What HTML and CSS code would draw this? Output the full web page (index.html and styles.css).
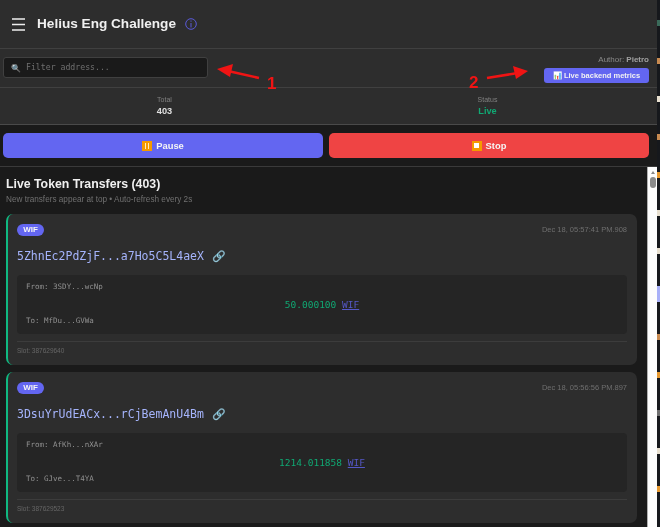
FILE: index.html
```html
<!DOCTYPE html>
<html lang="en">
<head>
<meta charset="utf-8">
<title>Helius Eng Challenge</title>
<link rel="stylesheet" href="styles.css">
</head>
<body>
<div class="app">
  <header class="header">
    <svg class="menu" width="13" height="13" viewBox="0 0 13 13"><path d="M0 1h13M0 6.500h13M0 12h13" stroke="#eee" stroke-width="1.300"/></svg>
    <h1 class="title">Helius Eng Challenge</h1>
    <svg class="info" width="12" height="12" viewBox="0 0 12 12"><circle cx="6" cy="6" r="5.300" fill="none" stroke="#5a5ad8" stroke-width="1"/><path d="M6 5v4.500M6 2.500v1.200" stroke="#5a5ad8" stroke-width="1"/></svg>
  </header>
  <section class="filter-row">
    <div class="filter"><span class="lens">🔍</span><span class="placeholder">Filter address...</span></div>
    <div class="author-box">
      <div class="author">Author: <b>Pietro</b></div>
      <button class="metrics">📊 Live backend metrics</button>
    </div>
  </section>
  <section class="stats">
    <div class="stat"><div class="stat-label">Total</div><div class="stat-value">403</div></div>
    <div class="stat"><div class="stat-label">Status</div><div class="stat-value live">Live</div></div>
  </section>
  <section class="controls">
    <button class="ctl pause"><span class="emoji pause-ico"><i></i><i></i></span>Pause</button>
    <button class="ctl stop"><span class="emoji stop-ico"><i></i></span>Stop</button>
  </section>
  <div class="list-wrap">
    <main class="list">
      <h2 class="list-title">Live Token Transfers (403)</h2>
      <p class="list-sub">New transfers appear at top • Auto-refresh every 2s</p>
      <article class="card">
        <div class="card-top"><span class="badge">WIF</span><span class="time">Dec 18, 05:57:41 PM.908</span></div>
        <div class="sig">5ZhnEc2PdZjF...a7Ho5C5L4aeX <span class="link">🔗</span></div>
        <div class="detail">
          <div class="addr">From: 3SDY...wcNp</div>
          <div class="amount">50.000100 <u class="token">WIF</u></div>
          <div class="addr">To: MfDu...GVWa</div>
        </div>
        <div class="slot">Slot: 387629640</div>
      </article>
      <article class="card">
        <div class="card-top"><span class="badge">WIF</span><span class="time">Dec 18, 05:56:56 PM.897</span></div>
        <div class="sig">3DsuYrUdEACx...rCjBemAnU4Bm <span class="link">🔗</span></div>
        <div class="detail">
          <div class="addr">From: AfKh...nXAr</div>
          <div class="amount">1214.011858 <u class="token">WIF</u></div>
          <div class="addr">To: GJve...T4YA</div>
        </div>
        <div class="slot">Slot: 387629523</div>
      </article>
    </main>
    <div class="scrollbar"><span class="sb-arrow"></span><span class="sb-thumb"></span></div>
  </div>
  <svg class="notes" width="657" height="100" viewBox="0 0 657 100">
    <path d="M259 78 L228 71" stroke="#f01414" stroke-width="2.500"/>
    <path d="M217 69 L233 64 L230 77Z" fill="#f01414"/>
    <path d="M487 78 L518 73" stroke="#f01414" stroke-width="2.500"/>
    <path d="M528 71 L513 66 L516 79Z" fill="#f01414"/>
    <text x="267" y="89" class="note-num">1</text>
    <text x="469" y="88" class="note-num">2</text>
  </svg>
</div>
<div class="edge">
  <i class="e1"></i><i class="e2"></i><i class="e3"></i><i class="e2"></i><i class="e4"></i><i class="e3"></i><i class="e3"></i><i class="e5"></i><i class="e2"></i><i class="e4"></i><i class="e6"></i><i class="e3"></i><i class="e4"></i>
</div>
</body>
</html>
```
FILE: styles.css
```css
* { box-sizing: border-box; }
html, body { margin: 0; height: 527px; overflow: hidden; background: #1a1a1a; }
body { display: flex; font-family: "Liberation Sans", Arial, sans-serif; }
.app { position: relative; width: 657px; height: 527px; display: flex; flex-direction: column; flex: none; filter: blur(.3px); }
.header { height: 49px; background: #2d2d2d; border-bottom: 1px solid #404040; display: flex; align-items: center; padding-left: 12px; flex: none; }
.menu { display: block; margin-right: 12px; }
.title { margin: 0 9px 0 0; font-size: 13.600px; font-weight: 700; color: #f0f0f0; line-height: 1; }
.info { display: block; }
.filter-row { height: 39px; background: #2d2d2d; border-bottom: 1px solid #404040; display: flex; justify-content: space-between; align-items: center; padding: 0 8px 0 3px; flex: none; }
.filter { width: 205px; height: 21px; margin-top: -2px; background: #1a1a1a; border: 1px solid #404040; border-radius: 3px; display: flex; align-items: center; padding-left: 7px; }
.lens { font-size: 8px; width: 15px; font-family: "Noto Sans", sans-serif; filter: saturate(.6); }
.placeholder { font: 8.200px/1 "DejaVu Sans Mono", monospace; color: #6f6f6f; padding-top: 1px; }
.author-box { display: flex; flex-direction: column; align-items: flex-end; gap: 3px; padding-top: 1px; }
.author { font-size: 8px; color: #8a8a8a; line-height: 10px; }
.author b { color: #a0a0a0; }
.metrics { width: 105px; height: 15px; padding: 0; background: #6366f1; color: #f2f2f2; border: 0; border-radius: 3px; font: 700 7.500px/15px "Liberation Sans", sans-serif; white-space: nowrap; }
.stats { height: 37px; background: #2d2d2d; border-bottom: 1px solid #4a4a4a; display: grid; grid-template-columns: 1fr 1fr; padding: 0 8px 0 3px; flex: none; }
.stat { text-align: center; padding-top: 8px; }
.stat-label { font-size: 7px; line-height: 8px; color: #808080; }
.stat-value { font-size: 9.200px; line-height: 12px; font-weight: 700; color: #e0e0e0; margin-top: 1px; }
.stat-value.live { color: #10a873; }
.controls { height: 42px; background: #1a1a1a; border-bottom: 1px solid #3a3a3a; display: grid; grid-template-columns: 320px 320px; gap: 6px; padding: 8px 0 0 3px; flex: none; }
.ctl { height: 25px; padding: 0; border: 0; border-radius: 5px; color: #f5f5f5; font: 700 9.400px/25px "Liberation Sans", sans-serif; display: flex; align-items: center; justify-content: center; }
.pause { background: #6366f1; }
.stop { background: #ef4444; }
.emoji { width: 10px; height: 10px; margin-right: 4px; background: #f59a00; display: flex; align-items: center; justify-content: center; gap: 1.500px; }
.pause-ico i { width: 1.500px; height: 6px; background: #ffe9c0; }
.stop-ico i { width: 5px; height: 5px; background: #fff; }
.list-wrap { flex: 1; min-height: 0; display: flex; background: #1a1a1a; }
.list { width: 647px; height: 360px; overflow: hidden; padding: 9px 10px 0 6px; flex: none; }
.list-title { margin: 0; font-size: 12.300px; line-height: 16px; font-weight: 700; color: #f0f0f0; }
.list-sub { margin: 3px 0 9px; font-size: 8.200px; line-height: 10px; color: #707070; }
.card { height: 151px; margin-bottom: 7px; background: #2d2d2d; border-left: 2px solid #10b981; border-radius: 7px; padding: 9px 10px 0 9px; }
.card-top { display: flex; justify-content: space-between; align-items: center; height: 13px; }
.badge { width: 27px; height: 12px; background: #6366f1; color: #f5f5f5; border-radius: 6px; text-align: center; font-size: 8px; line-height: 12px; font-weight: 700; }
.time { font-size: 7.500px; color: #6f6f6f; }
.sig { margin-top: 12px; font: 11.500px/16px "DejaVu Sans Mono", monospace; color: #a5b4fc; white-space: pre; }
.link { font-size: 11px; font-family: "Noto Sans", sans-serif; margin-left: 1px; }
.detail { margin-top: 11px; height: 59px; background: #252525; border-radius: 4px; padding: 7px 9px 0; }
.addr { font: 7.500px/9px "DejaVu Sans Mono", monospace; color: #909090; }
.amount { margin: 9px 0 6px; text-align: center; font: 9.500px/10px "DejaVu Sans Mono", monospace; color: #10a873; }
.token { color: #5558c8; }
.slot { margin-top: 7px; padding-top: 4px; border-top: 1px solid #3c3c3c; font-size: 6.500px; line-height: 9px; color: #666; }
.scrollbar { width: 10px; height: 360px; background: #fdfdfd; border-left: 1px solid #b0b0b0; display: flex; flex-direction: column; align-items: center; flex: none; }
.sb-arrow { margin-top: 4px; width: 0; height: 0; border: 2px solid transparent; border-bottom: 3px solid #888; border-top: 0; }
.sb-thumb { margin-top: 3px; width: 6px; height: 11px; background: #8a8a8a; border-radius: 3px; }
.notes { position: absolute; left: 0; top: 0; pointer-events: none; }
.note-num { font: 700 17px "Liberation Sans", sans-serif; fill: #f01414; }
.edge { width: 3px; height: 527px; background: #16181c; display: flex; flex-direction: column; gap: 32px; padding-top: 20px; flex: none; }
.edge i { display: block; width: 3px; height: 6px; }
.e1 { background: #3a6a5a; }
.e2 { background: #c88a50; }
.e3 { background: #e8e0d0; }
.e4 { background: #e89a30; }
.e5 { background: #a8b0f8; height: 16px !important; }
.e6 { background: #707070; }
```
